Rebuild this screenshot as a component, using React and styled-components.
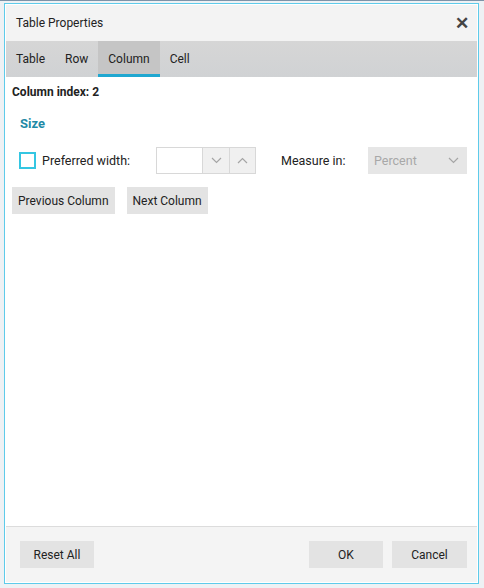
import React from "react";
import styled, { createGlobalStyle } from "styled-components";

const GlobalStyle = createGlobalStyle`
  html, body {
    margin: 0;
    padding: 0;
    background: #eef1f4;
    font-family: Roboto, "Liberation Sans", sans-serif;
  }
  * { box-sizing: border-box; }
`;

const Page = styled.div`
  width: 484px;
  height: 588px;
  padding: 2px 5px 3px 4px;
  border-top: 1px solid #7d93a8;
`;

const Dialog = styled.div`
  height: 581px;
  border: 1px solid #5ecbea;
  padding: 1px;
  background: #fff;
  display: flex;
  flex-direction: column;
`;

const TitleBar = styled.div`
  height: 36px;
  background: #f3f3f3;
  display: flex;
  align-items: center;
  justify-content: space-between;
  padding: 0 8px 0 10px;
  font-size: 12px;
  color: #222;
`;

const Close = styled.span`
  font-size: 17px;
  font-weight: 700;
  color: #444;
  line-height: 1;
`;

const Tabs = styled.div`
  height: 36px;
  background: linear-gradient(#d6d6d6, #d0d2d4);
  display: flex;
`;

const Tab = styled.div`
  height: 36px;
  padding: 3px 10px 0;
  display: flex;
  align-items: center;
  font-size: 12px;
  color: #222;
  background: ${(p) => (p.$active ? "#c5c5c5" : "transparent")};
  border-bottom: 3px solid ${(p) => (p.$active ? "#1fa7d0" : "transparent")};
`;

const Body = styled.div`
  flex: 1;
  padding: 8px 6px;
  font-size: 12px;
  color: #222;
`;

const IndexLabel = styled.div`
  font-weight: 700;
  font-size: 12px;
`;

const Section = styled.div`
  margin: 17px 0 0 8px;
  color: #1f8aa6;
  font-weight: 700;
  font-size: 13px;
`;

const Row = styled.div`
  display: flex;
  align-items: center;
  margin-top: 16px;
  height: 27px;
`;

const Check = styled.span`
  width: 17px;
  height: 17px;
  border: 2px solid #34c6e2;
  margin: 0 6px 0 7px;
`;

const Label = styled.span`
  width: ${(p) => p.$w}px;
  margin-left: ${(p) => p.$ml || 0}px;
  font-size: 12.5px;
`;

const Spin = styled.div`
  display: flex;
  height: 27px;
  border: 1px solid #d8d8d8;
`;

const SpinInput = styled.div`
  width: 46px;
  background: #fff;
  border-right: 1px solid #d8d8d8;
`;

const SpinBtn = styled.div`
  width: 26px;
  background: #f0f0f0;
  display: flex;
  align-items: center;
  justify-content: center;
  border-left: ${(p) => (p.$sep ? "1px solid #d8d8d8" : "none")};
`;

const Select = styled.div`
  width: 99px;
  height: 27px;
  background: #e6e6e6;
  display: flex;
  align-items: center;
  justify-content: space-between;
  padding: 0 8px 0 6px;
  color: #a8a8a8;
  font-size: 12.5px;
`;

const Buttons = styled.div`
  display: flex;
  gap: 12px;
  margin-top: 13px;
`;

const Button = styled.div`
  height: 27px;
  padding: 0 6px;
  min-width: ${(p) => p.$min || 0}px;
  background: #e3e3e3;
  display: flex;
  align-items: center;
  justify-content: center;
  font-size: 12px;
  color: #222;
`;

const Footer = styled.div`
  height: 56px;
  background: #f4f4f4;
  border-top: 1px solid #dcdcdc;
  display: flex;
  align-items: center;
  padding: 0 10px 0 14px;
  gap: 9px;
`;

const Spacer = styled.div`
  flex: 1;
`;

const Chevron = ({ up }) => (
  <svg width="11" height="7" viewBox="0 0 11 7">
    <path
      d={up ? "M1 6 L5.5 1.5 L10 6" : "M1 1 L5.5 5.5 L10 1"}
      fill="none"
      stroke="#a5a5a5"
      strokeWidth="1.2"
    />
  </svg>
);

export default function App() {
  return (
    <>
      <GlobalStyle />
      <Page>
        <Dialog>
          <TitleBar>
            <span>Table Properties</span>
            <Close>✕</Close>
          </TitleBar>
          <Tabs>
            <Tab>Table</Tab>
            <Tab>Row</Tab>
            <Tab $active>Column</Tab>
            <Tab>Cell</Tab>
          </Tabs>
          <Body>
            <IndexLabel>Column index: 2</IndexLabel>
            <Section>Size</Section>
            <Row>
              <Check />
              <Label $w={114}>Preferred width:</Label>
              <Spin>
                <SpinInput />
                <SpinBtn>
                  <Chevron />
                </SpinBtn>
                <SpinBtn $sep>
                  <Chevron up />
                </SpinBtn>
              </Spin>
              <Label $w={87} $ml={25}>
                Measure in:
              </Label>
              <Select>
                <span>Percent</span>
                <Chevron />
              </Select>
            </Row>
            <Buttons>
              <Button>Previous Column</Button>
              <Button>Next Column</Button>
            </Buttons>
          </Body>
          <Footer>
            <Button $min={74}>Reset All</Button>
            <Spacer />
            <Button $min={74}>OK</Button>
            <Button $min={75}>Cancel</Button>
          </Footer>
        </Dialog>
      </Page>
    </>
  );
}
